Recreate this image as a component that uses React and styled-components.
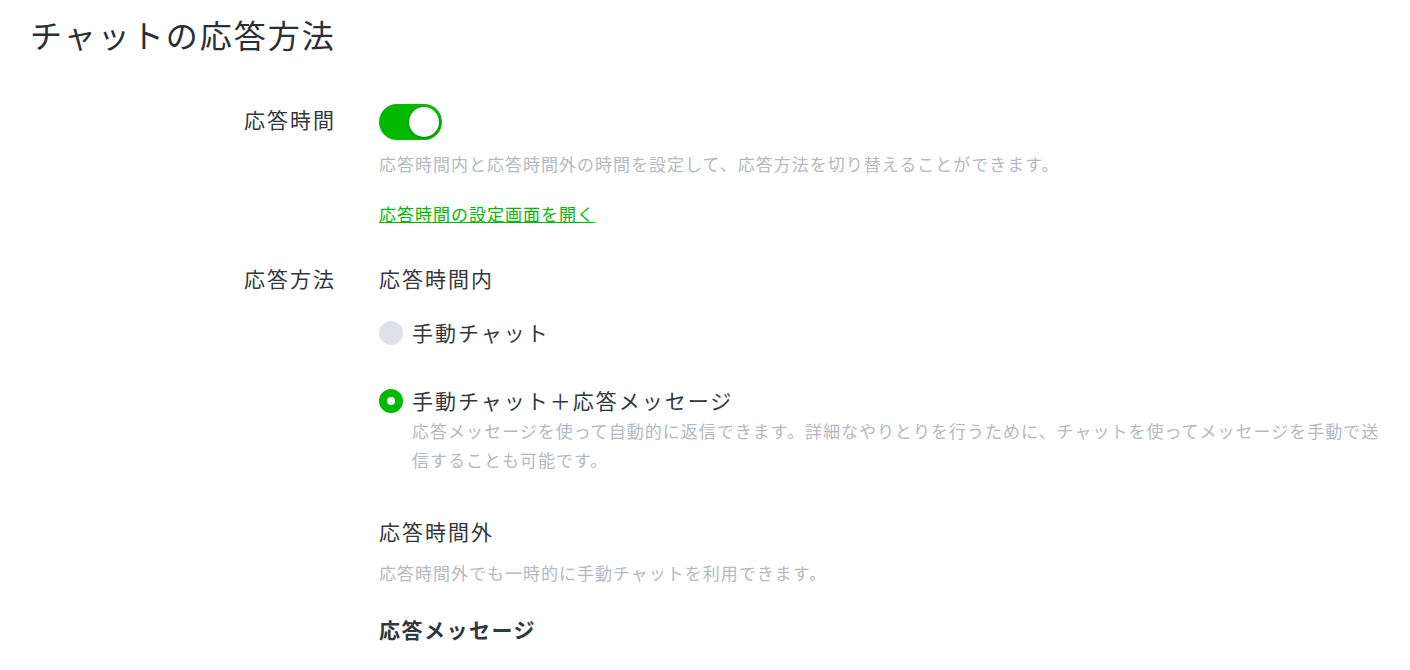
import React, { useState } from 'react'
import styled, { createGlobalStyle, css } from 'styled-components'

const GlobalStyle = createGlobalStyle`
    body {
        margin: 0;
        background: #fff;
        font-family: "Noto Sans CJK JP", "Noto Sans", sans-serif;
        color: #2e3238;
    }
`

const GREEN = '#00b900'

const PageStyle = styled.div`
    padding: 14px 15px 0 30px;
`

const TitleStyle = styled.h1`
    margin: 0;
    font-size: 32px;
    line-height: 40px;
    font-weight: 400;
    letter-spacing: 2px;
    color: #2b2f35;
`

const RowStyle = styled.div`
    display: grid;
    grid-template-columns: 349px 1fr;
    margin-top: ${props => props.gap}px;
`

const LabelStyle = styled.div`
    font-size: 21px;
    line-height: 36px;
    letter-spacing: 2px;
    color: #33373d;
    padding-left: 214px;
`

const FieldStyle = styled.div`
    display: flex;
    flex-direction: column;
    align-items: flex-start;
`

const ToggleStyle = styled.button`
    position: relative;
    width: 63px;
    height: 36px;
    margin-top: 3px;
    border: none;
    padding: 0;
    border-radius: 18px;
    background: ${props => props.on ? GREEN : '#dfe1e6'};
    cursor: pointer;
    &::after {
        content: '';
        position: absolute;
        top: 3px;
        left: ${props => props.on ? '30px' : '3px'};
        width: 30px;
        height: 30px;
        border-radius: 50%;
        background: #fff;
        box-shadow: 0 1px 3px rgba(0, 0, 0, 0.3);
    }
`

const DescStyle = styled.p`
    margin: ${props => props.top || 0}px 0 0 0;
    font-size: 17px;
    line-height: 29px;
    letter-spacing: 1px;
    color: #b4b9c1;
`

const LinkStyle = styled.a`
    margin-top: 21px;
    font-size: 17px;
    line-height: 29px;
    letter-spacing: 1px;
    color: ${GREEN};
    text-decoration: underline;
    cursor: pointer;
`

const HeadStyle = styled.div`
    margin-top: ${props => props.top || 0}px;
    font-size: 21px;
    line-height: 36px;
    letter-spacing: 2px;
    color: #33373d;
    ${props => props.bold && css`
        font-weight: 700;
        letter-spacing: 1.5px;
    `}
`

const OptionStyle = styled.label`
    display: grid;
    grid-template-columns: 24px 1fr;
    column-gap: 9px;
    margin-top: ${props => props.top}px;
    cursor: pointer;
`

const RadioStyle = styled.span`
    width: 24px;
    height: 24px;
    margin-top: 5px;
    border-radius: 50%;
    box-sizing: border-box;
    background: ${props => props.checked ? '#fff' : '#dfe1e6'};
    ${props => props.checked && css`
        border: 8px solid ${GREEN};
    `}
`

const OptionTextStyle = styled.span`
    font-size: 21px;
    line-height: 32px;
    letter-spacing: 2px;
    color: #33373d;
`

const OptionDescStyle = styled(DescStyle)`
    grid-column: 2;
`

const App = () => {
    const [on, setOn] = useState(true)
    const [mode, setMode] = useState('reply')

    return (
        <PageStyle>
            <GlobalStyle />
            <TitleStyle>チャットの応答方法</TitleStyle>

            <RowStyle gap={47}>
                <LabelStyle>応答時間</LabelStyle>
                <FieldStyle>
                    <ToggleStyle on={on ? 1 : 0} onClick={() => setOn(!on)} />
                    <DescStyle top={9}>
                        応答時間内と応答時間外の時間を設定して、応答方法を切り替えることができます。
                    </DescStyle>
                    <LinkStyle>応答時間の設定画面を開く</LinkStyle>
                </FieldStyle>
            </RowStyle>

            <RowStyle gap={32}>
                <LabelStyle>応答方法</LabelStyle>
                <div>
                    <HeadStyle>応答時間内</HeadStyle>
                    <OptionStyle top={20} onClick={() => setMode('manual')}>
                        <RadioStyle checked={mode === 'manual'} />
                        <OptionTextStyle>手動チャット</OptionTextStyle>
                    </OptionStyle>
                    <OptionStyle top={36} onClick={() => setMode('reply')}>
                        <RadioStyle checked={mode === 'reply'} />
                        <OptionTextStyle>手動チャット＋応答メッセージ</OptionTextStyle>
                        <OptionDescStyle>
                            応答メッセージを使って自動的に返信できます。詳細なやりとりを行うために、チャットを使ってメッセージを手動で送信することも可能です。
                        </OptionDescStyle>
                    </OptionStyle>

                    <HeadStyle top={39}>応答時間外</HeadStyle>
                    <DescStyle top={9}>応答時間外でも一時的に手動チャットを利用できます。</DescStyle>
                    <HeadStyle top={24} bold>応答メッセージ</HeadStyle>
                </div>
            </RowStyle>
        </PageStyle>
    )
}

export default App
